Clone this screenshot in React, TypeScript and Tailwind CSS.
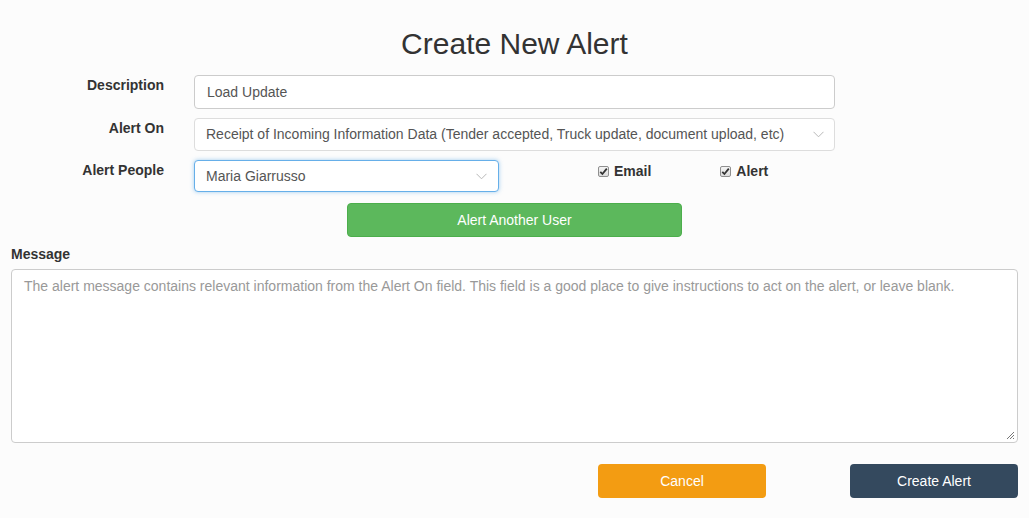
import React from "react";

function Chevron() {
  return (
    <svg width="11" height="7" viewBox="0 0 11 7" className="shrink-0">
      <path d="M0.5 0.8 L5.5 5.8 L10.5 0.8" fill="none" stroke="#b8b8b8" strokeWidth="1" />
    </svg>
  );
}

function Check({ label }: { label: string }) {
  return (
    <label className="flex items-center gap-[5px] font-bold text-[14px] text-[#333]">
      <span className="w-[11px] h-[11px] border border-[#8f8f8f] rounded-[2px] bg-gradient-to-b from-[#f4f4f4] to-[#dcdcdc] flex items-center justify-center">
        <svg width="9" height="9" viewBox="0 0 9 9">
          <path d="M1.3 4.8 L3.4 7 L7.8 1.6" fill="none" stroke="#333" strokeWidth="1.8" />
        </svg>
      </span>
      {label}
    </label>
  );
}

export default function App() {
  return (
    <div className="min-h-[518px] w-[1029px] bg-[#fcfcfc] font-['Liberation_Sans',Arial,sans-serif] text-[#333] text-[14px]">
      <h1 className="text-center text-[30px] leading-[36px] pt-[26px] text-[#333]">Create New Alert</h1>

      <div className="mt-[13px] flex items-start">
        <div className="w-[164px] text-right font-bold leading-[20px]">Description</div>
        <div className="ml-[30px] w-[641px] h-[34px] bg-white border border-[#ccc] rounded-[4px] px-[12px] flex items-center text-[#555]">
          Load Update
        </div>
      </div>

      <div className="mt-[9px] flex items-start">
        <div className="w-[164px] text-right font-bold leading-[20px]">Alert On</div>
        <div className="ml-[30px] w-[641px] h-[33px] bg-white border border-[#ddd] rounded-[4px] pl-[11px] pr-[10px] flex items-center justify-between text-[#555]">
          <span>Receipt of Incoming Information Data (Tender accepted, Truck update, document upload, etc)</span>
          <Chevron />
        </div>
      </div>

      <div className="mt-[9px] flex items-start">
        <div className="w-[164px] text-right font-bold leading-[20px]">Alert People</div>
        <div className="ml-[30px] w-[305px] h-[32px] bg-white border border-[#66afe9] shadow-[0_0_4px_rgba(102,175,233,0.6)] rounded-[4px] pl-[11px] pr-[11px] flex items-center justify-between text-[#555]">
          <span>Maria Giarrusso</span>
          <Chevron />
        </div>
        <div className="ml-[99px] mt-[1px]">
          <Check label="Email" />
        </div>
        <div className="ml-[69px] mt-[1px]">
          <Check label="Alert" />
        </div>
      </div>

      <div className="mt-[11px] flex">
        <button className="ml-[347px] w-[335px] h-[34px] bg-[#5cb85c] border border-[#4cae4c] rounded-[4px] text-white text-[14px]">
          Alert Another User
        </button>
      </div>

      <div className="mt-[7px] px-[11px]">
        <div className="font-bold leading-[20px]">Message</div>
        <div className="mt-[5px] h-[174px] bg-white border border-[#ccc] rounded-[4px] px-[12px] pt-[6px] text-[#999] leading-[20px] relative">
          The alert message contains relevant information from the Alert On field. This field is a good place to give instructions to act on the alert, or leave blank.
          <svg width="9" height="9" viewBox="0 0 9 9" className="absolute right-[2px] bottom-[2px]">
            <path d="M8 1 L1 8 M8 4 L4 8 M8 7 L7 8" stroke="#777" strokeWidth="1" />
          </svg>
        </div>
      </div>

      <div className="mt-[21px] flex justify-end gap-[84px] pr-[11px]">
        <button className="w-[168px] h-[34px] bg-[#f39c12] rounded-[4px] text-white text-[14px]">Cancel</button>
        <button className="w-[168px] h-[34px] bg-[#34495e] rounded-[4px] text-white text-[14px]">Create Alert</button>
      </div>
    </div>
  );
}
